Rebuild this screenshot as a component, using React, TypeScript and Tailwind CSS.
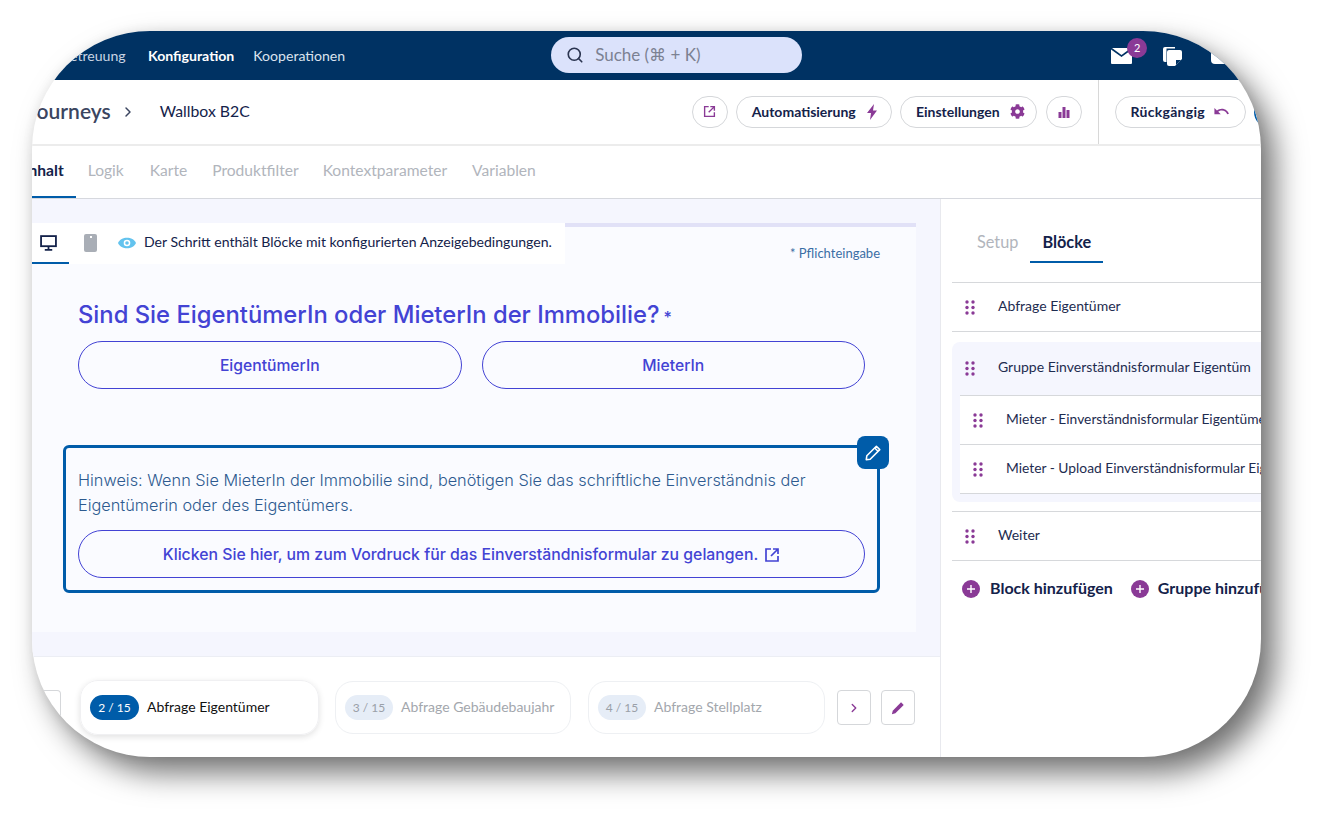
import { ChevronRight, Search } from 'lucide-react';
import { FaCog } from 'react-icons/fa';
import { MdUndo } from 'react-icons/md';

const ui = "font-['Lato','Open_Sans',sans-serif]";

function ExternalIcon({ className }: { className?: string }) {
  return (
    <svg viewBox="0 0 16 16" className={className} fill="none" stroke="currentColor" strokeWidth="1.7">
      <path d="M7 2H2v12h12V9" />
      <path d="M9 2h5v5M14 2 7 9" />
    </svg>
  );
}

function Grip({ className }: { className?: string }) {
  return (
    <svg viewBox="0 0 10 15" className={className} fill="#8a3a96">
      <circle cx="2" cy="2" r="1.7" />
      <circle cx="8" cy="2" r="1.7" />
      <circle cx="2" cy="7.5" r="1.7" />
      <circle cx="8" cy="7.5" r="1.7" />
      <circle cx="2" cy="13" r="1.7" />
      <circle cx="8" cy="13" r="1.7" />
    </svg>
  );
}

function PlusCircle() {
  return (
    <span className="flex h-[18px] w-[18px] shrink-0 items-center justify-center rounded-full bg-[#8a3a96]">
      <svg viewBox="0 0 10 10" className="h-[10px] w-[10px]" stroke="white" strokeWidth="1.4">
        <path d="M5 1v8M1 5h8" />
      </svg>
    </span>
  );
}

function Pill({ children, className }: { children: React.ReactNode; className?: string }) {
  return (
    <button className={`flex h-8 shrink-0 items-center justify-center rounded-full border border-[#d5d7da] bg-white pb-px text-[14px] font-bold text-[#14224a] ${className}`}>
      {children}
    </button>
  );
}

function Row({ label, inner }: { label: string; inner?: boolean }) {
  return (
    <div className={`flex h-[49px] shrink-0 items-center whitespace-nowrap border-b border-[#d6d8db] text-[#1e2c50] ${inner ? 'bg-white text-[13.8px]' : 'text-[14px]'}`}>
      <Grip className="ml-[13px] h-[15px] w-[10px] shrink-0" />
      <span className={`ml-[23px] ${inner ? 'mb-[2px]' : 'mb-1'}`}>{label}</span>
    </div>
  );
}

function StepCard({ n, label, active, className }: { n: string; label: string; active?: boolean; className: string }) {
  return (
    <div className={`flex shrink-0 items-center rounded-[18px] border pl-[9px] ${active ? 'h-[55px] border-[#f0f0f2] shadow-[0_2px_6px_rgba(0,0,0,0.12)]' : 'h-[53px] border-[#eef0f3]'} ${className}`}>
      <span className={`flex h-[25px] items-center justify-center rounded-full text-[12px] ${active ? 'w-[49px] bg-[#005ca9] text-white' : 'w-[48px] bg-[#e6edf7] text-[#9aa0a8]'}`}>{n}</span>
      <span className={`mb-[2px] ml-2 whitespace-nowrap text-[14px] ${active ? 'text-[#111]' : 'text-[#a3a7ad]'}`}>{label}</span>
    </div>
  );
}

export default function App() {
  return (
    <div className="h-[820px] w-[1324px] overflow-hidden bg-white pl-8 pt-[31px]">
      <div className={`flex h-[726px] w-[1229px] flex-col overflow-hidden rounded-[118px] bg-white shadow-[14px_16px_30px_rgba(0,0,0,0.55),0_0_12px_rgba(0,0,0,0.06)] ${ui}`}>
        {/* top nav */}
        <div className="flex h-[49px] shrink-0 items-center bg-[#003263] text-[14.1px] text-white">
          <span className="ml-[29px] w-[66px] shrink-0 whitespace-nowrap pt-px text-[#c9d4e3]">Betreuung</span>
          <span className="ml-[21px] shrink-0 pt-px font-bold">Konfiguration</span>
          <span className="ml-[19px] shrink-0 pt-px text-[#dbe3ee]">Kooperationen</span>
          <div className="mb-[2px] ml-[206px] flex h-9 w-[251px] shrink-0 items-center rounded-full bg-[#dbe2fb] pl-[15px] text-[#7b8192]">
            <Search size={18} className="text-[#2b3550]" strokeWidth={2.2} />
            <span className="ml-[11px] text-[17px]">Suche (⌘ + K)</span>
          </div>
          <div className="relative ml-[309px] mt-[1px] shrink-0">
            <svg viewBox="0 0 21 16" className="h-4 w-[21px]">
              <path d="M0 1.5 10.5 9 21 1.5V15a1 1 0 0 1-1 1H1a1 1 0 0 1-1-1z" fill="white" />
              <path d="M1 0h19l-9.5 7z" fill="white" />
            </svg>
            <span className="absolute -right-[15px] -top-[10px] flex h-5 w-5 items-center justify-center rounded-full bg-[#8a3a96] text-[11px] text-white">2</span>
          </div>
          <svg viewBox="0 0 22 24" className="ml-[29px] h-6 w-[22px] shrink-0" fill="white">
            <path d="M4 3h10v1.5H5.5V18H4a2 2 0 0 1-2-2V5a2 2 0 0 1 2-2z" />
            <path d="M8 6h11a2 2 0 0 1 2 2v7l-7 7H8a2 2 0 0 1-2-2V8a2 2 0 0 1 2-2z" />
            <path d="M15 21v-5h5z" fill="#003263" />
          </svg>
          <span className="ml-[28px] h-[17px] w-6 shrink-0 rounded-sm bg-white" />
        </div>

        {/* breadcrumb + actions */}
        <div className="flex h-[66px] shrink-0 items-center border-b-2 border-[#ececec]">
          <span className="-ml-1 mb-[2px] shrink-0 text-[21px] font-semibold text-[#3b4560]">Journeys</span>
          <ChevronRight size={16} className="ml-[9px] shrink-0 text-[#3b4560]" strokeWidth={2.2} />
          <span className="mb-[2px] ml-6 shrink-0 text-[15.8px] text-[#14224a]">Wallbox B2C</span>
          <Pill className="ml-[442px] w-9"><ExternalIcon className="h-[13px] w-[13px] text-[#8a3a96]" /></Pill>
          <Pill className="ml-2 w-[156px] gap-[10px] pl-[2px]">
            Automatisierung
            <svg viewBox="0 0 12 16" className="h-4 w-3" fill="#8a3a96">
              <path d="M8 0 1 9h4l-1 7 7-9.5H7z" />
            </svg>
          </Pill>
          <Pill className="ml-2 w-[137px] gap-[10px] pl-1">Einstellungen <FaCog size={15} className="text-[#8a3a96]" /></Pill>
          <Pill className="ml-[9px] w-9">
            <svg viewBox="0 0 12 12" className="h-3 w-3" fill="#8a3a96">
              <rect x="0.5" y="6" width="3" height="6" />
              <rect x="4.5" y="1" width="3" height="11" />
              <rect x="8.5" y="4" width="3" height="8" />
            </svg>
          </Pill>
          <div className="ml-4 h-full w-px shrink-0 bg-[#d8d8d8]" />
          <Pill className="ml-4 w-[131px] gap-[8px] tracking-[0.3px]">Rückgängig <MdUndo size={17} className="text-[#8a3a96]" /></Pill>
          <button className="ml-2 h-8 w-9 shrink-0 rounded-full border-2 border-[#005ca9] bg-white" />
        </div>

        {/* tabs */}
        <div className="flex h-[53px] shrink-0 items-stretch border-b border-[#d6d8de] text-[15.6px] text-[#b1b5bc]">
          <span className="-ml-2 flex shrink-0 items-center border-b-2 border-[#005ca9] pr-3 font-bold text-[#14224a]">Inhalt</span>
          <span className="ml-3 flex items-center pb-[2px]">Logik</span>
          <span className="ml-[26px] flex items-center pb-[2px]">Karte</span>
          <span className="ml-[25px] flex items-center pb-[2px]">Produktfilter</span>
          <span className="ml-6 flex items-center pb-[2px]">Kontextparameter</span>
          <span className="ml-[25px] flex items-center pb-[2px]">Variablen</span>
        </div>

        <div className="flex min-h-0 flex-1">
          {/* center */}
          <div className="flex w-[909px] shrink-0 flex-col border-r border-[#e8e9ee]">
            <div className="h-[458px] shrink-0 border-b border-[#eceef4] bg-[#f5f6fe] pt-6">
              <div className="h-[409px] w-[884px] bg-[#fafbff]">
                <div className="flex h-[41px] items-start">
                  <div className="flex h-[41px] w-[533px] shrink-0 items-center bg-white pb-[2px] text-[14.07px] text-[#14224a]">
                    <div className="-mb-[2px] flex h-[41px] w-[37px] shrink-0 items-center justify-end border-b-2 border-[#005ca9] pr-3">
                      <svg viewBox="0 0 16 15" className="h-4 w-[17px]" fill="none" stroke="#14224a" strokeWidth="1.7">
                        <rect x="1" y="1" width="14" height="9.5" />
                        <path d="M8 10.5V14M4.5 14h7" />
                      </svg>
                    </div>
                    <span className="ml-[15px] flex h-[18px] w-[13px] shrink-0 justify-center rounded-[2px] bg-[#a9aeb6] pt-[2px]">
                      <span className="h-[2px] w-[2px] bg-white" />
                    </span>
                    <svg viewBox="0 0 18 12" className="ml-[21px] h-3 w-[18px] shrink-0">
                      <path d="M0 6c3-7 15-7 18 0-3 7-15 7-18 0z" fill="#63c3ee" />
                      <circle cx="9" cy="6" r="3.3" fill="white" />
                      <circle cx="9" cy="6" r="1.8" fill="#63c3ee" />
                    </svg>
                    <span className="mb-px ml-2 whitespace-nowrap">Der Schritt enthält Blöcke mit konfigurierten Anzeigebedingungen.</span>
                  </div>
                  <div className="flex-1">
                    <div className="h-1 bg-[#e1e1f7]" />
                    <div className="pr-9 pt-[17px] text-right text-[13px] text-[#3a6ea5]">* Pflichteingabe</div>
                  </div>
                </div>
                <div className="pl-[46px] pr-[51px] font-['Inter',sans-serif]">
                  <div className="mt-[33px] whitespace-nowrap text-[23.8px] font-medium leading-[36px] text-[#4343d4]">
                    Sind Sie EigentümerIn oder MieterIn der Immobilie?<span className="ml-1 align-baseline text-[16px]">*</span>
                  </div>
                  <div className="mt-[6px] flex gap-5">
                    <button className="h-12 flex-1 rounded-full border border-[#4343d4] pt-px text-[15.7px] font-medium text-[#4343d4]">EigentümerIn</button>
                    <button className="h-12 flex-1 rounded-full border border-[#4343d4] pt-px text-[15.7px] font-medium text-[#4343d4]">MieterIn</button>
                  </div>
                </div>
                <div className="relative ml-[31px] mt-14 h-[148px] w-[817px] rounded-md border-[3px] border-[#005ca9] px-3 pt-[20px] font-['Inter',sans-serif]">
                  <button className="absolute -right-3 -top-3 flex h-[33px] w-[32px] items-center justify-center rounded-lg bg-[#005ca9]">
                    <svg viewBox="0 0 16 16" className="h-[18px] w-[18px]" fill="none" stroke="white" strokeWidth="1.4" strokeLinejoin="round">
                      <path d="M11 2l3 3-8.5 8.5L2 14l.5-3.5z" />
                      <path d="M9.5 3.5l3 3" />
                    </svg>
                  </button>
                  <p className="text-[16.3px] font-light leading-[25px] text-[#2d5a8f]">
                    Hinweis: Wenn Sie MieterIn der Immobilie sind, benötigen Sie das schriftliche Einverständnis der Eigentümerin oder des Eigentümers.
                  </p>
                  <button className="mt-3 flex h-12 w-[787px] items-center justify-center gap-[6px] rounded-full border border-[#4343d4] pt-px text-[15.8px] font-medium text-[#4343d4]">
                    Klicken Sie hier, um zum Vordruck für das Einverständnisformular zu gelangen.
                    <ExternalIcon className="h-4 w-4" />
                  </button>
                </div>
              </div>
            </div>
            {/* step strip */}
            <div className="flex flex-1 items-start pt-[23px]">
              <div className="mt-[10px] h-[35px] w-[29px] shrink-0 rounded-r border border-l-0 border-[#d5d7da]" />
              <StepCard n="2 / 15" label="Abfrage Eigentümer" active className="ml-[19px] w-[239px]" />
              <StepCard n="3 / 15" label="Abfrage Gebäudebaujahr" className="ml-4 mt-px w-[236px]" />
              <StepCard n="4 / 15" label="Abfrage Stellplatz" className="ml-[17px] mt-px w-[237px]" />
              <button className="ml-3 mt-[10px] flex h-[35px] w-[34px] shrink-0 items-center justify-center rounded border border-[#d5d7da]">
                <ChevronRight size={14} strokeWidth={2.4} className="text-[#8a3a96]" />
              </button>
              <button className="ml-[10px] mt-[10px] flex h-[35px] w-[34px] shrink-0 items-center justify-center rounded border border-[#d5d7da]">
                <svg viewBox="0 0 16 16" className="h-[14px] w-[14px]" fill="#8a3a96">
                  <path d="M11.5 1.5l3 3L5 14l-4 1 1-4z" />
                </svg>
              </button>
            </div>
          </div>

          {/* right panel */}
          <div className="min-w-0 flex-1 pl-[11px]">
            <div className="flex h-[84px] items-end border-b border-[#d6d8db] pb-[19px]">
              <div className="flex text-[16.3px]">
                <span className="ml-[25px] pb-[7px] text-[#b1b5bc]">Setup</span>
                <span className="ml-3 border-b-2 border-[#005ca9] px-3 pb-[7px] font-bold text-[#14224a]">Blöcke</span>
              </div>
            </div>
            <Row label="Abfrage Eigentümer" />
            <div className="mt-[10px] rounded-l-lg bg-[#f5f6fe] pb-2 pl-2">
              <div className="-ml-2 flex h-[53px] items-center whitespace-nowrap text-[14px] text-[#1e2c50]">
                <Grip className="ml-[13px] h-[15px] w-[10px] shrink-0" />
                <span className="mb-1 ml-[23px]">Gruppe Einverständnisformular Eigentüm</span>
              </div>
              <div className="border-t border-[#d6d8db]">
                <Row label="Mieter - Einverständnisformular Eigentümer" inner />
                <Row label="Mieter - Upload Einverständnisformular Eigentümer" inner />
              </div>
            </div>
            <div className="mt-[9px] border-t border-[#d6d8db]">
              <Row label="Weiter" />
            </div>
            <div className="flex h-[57px] items-center whitespace-nowrap pb-[2px] pl-[10px] text-[16px] font-bold text-[#14224a]">
              <PlusCircle />
              <span className="mb-[2px] ml-[10px]">Block hinzufügen</span>
              <span className="ml-[18px]"><PlusCircle /></span>
              <span className="mb-[2px] ml-[9px]">Gruppe hinzufügen</span>
            </div>
          </div>
        </div>
      </div>
    </div>
  );
}
